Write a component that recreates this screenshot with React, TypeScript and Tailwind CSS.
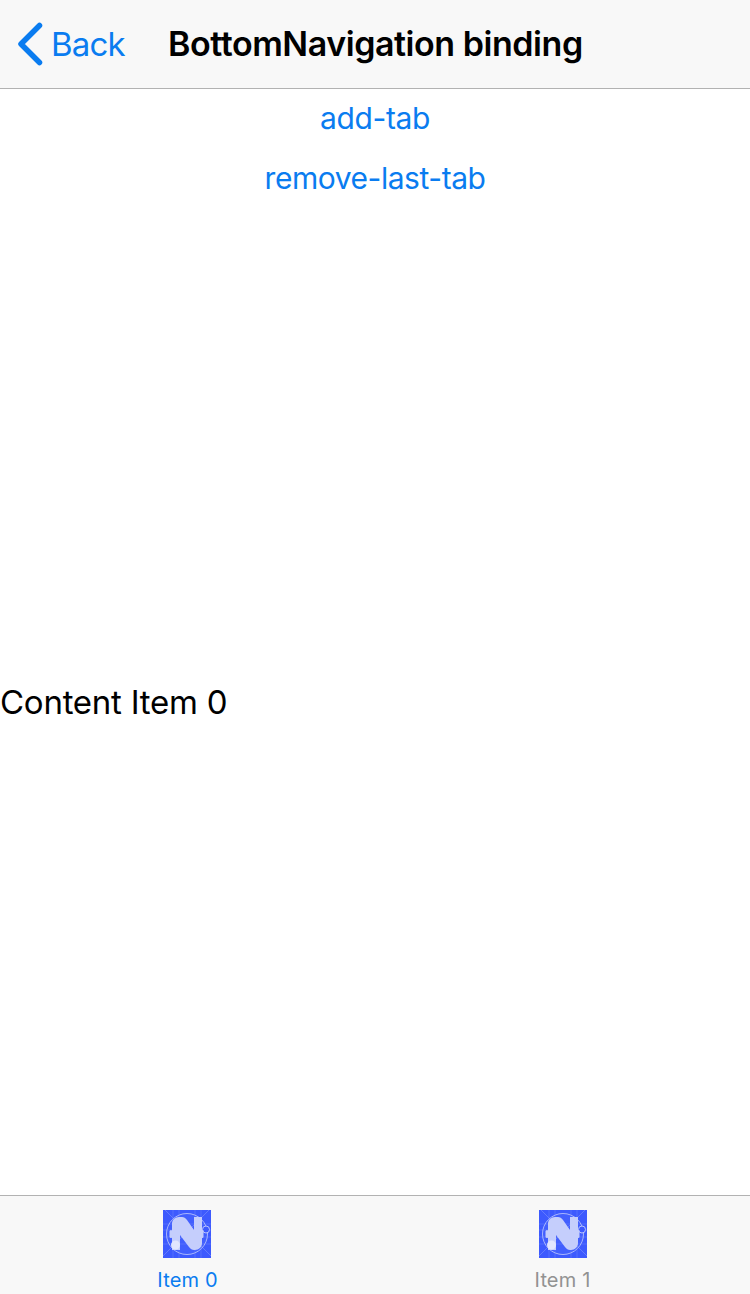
const NativeScriptIcon = () => (
  <svg width="48" height="48" viewBox="0 0 48 48" className="block">
    <rect width="48" height="48" fill="#3d5afe" />
    <g stroke="#8ea0fb" strokeWidth="0.6" fill="none">
      <path d="M0 14H48M0 20H48M0 27H48M0 34H48M10 0V48M16 0V48M32 0V48M38 0V48" opacity="0.5" />
      <path d="M2 0L48 46M46 0L0 46" opacity="0.8" />
    </g>
    <circle cx="24" cy="24" r="20.5" fill="#6f85fc" fillOpacity="0.12" stroke="#a9b6fd" strokeWidth="1" />
    <path d="M9 14C9 10 12 7 16 7H19C21 7 22.5 8 24 10L31 20V7H39V33C39 37 36 40 32 40H31C29 40 27.5 39 26 37L17 25V40H9Z" fill="#c5cefc" />
    <circle cx="12.5" cy="35" r="4.5" fill="#e2e6fe" />
    <circle cx="43" cy="19.5" r="3.5" fill="#3d5afe" stroke="#b9c4fd" strokeWidth="1" />
    <rect x="6.5" y="20" width="3" height="8" rx="1.5" fill="#c5cefc" />
    <rect x="38" y="20" width="2.5" height="8" rx="1.2" fill="#c5cefc" />
  </svg>
);

const tabs = [
  { label: 'Item 0', color: 'text-[#0a7cf0]' },
  { label: 'Item 1', color: 'text-[#929292]' },
];

export default function App() {
  return (
    <div className="flex h-[1294px] w-[750px] flex-col overflow-hidden bg-white font-['Inter',sans-serif] text-black">
      <header className="flex h-[89px] shrink-0 items-center border-b border-[#b2b2b2] bg-[#f8f8f8]">
        <svg width="26" height="44" viewBox="0 0 26 44" className="ml-[17px] shrink-0">
          <path d="M22.5 3.5L4 22L22.5 40.5" fill="none" stroke="#0a7cf0" strokeWidth="5.5" strokeLinecap="round" strokeLinejoin="round" />
        </svg>
        <span className="ml-[8px] w-[117px] shrink-0 text-[33px] leading-none tracking-[-0.8px] text-[#0a7cf0]">Back</span>
        <h1 className="text-[34px] font-semibold leading-none tracking-[-0.45px]">BottomNavigation binding</h1>
      </header>
      <main className="flex min-h-0 flex-1 flex-col">
        <button className="h-[60px] shrink-0 pb-[2px] text-[30px] tracking-[-0.4px] text-[#0a7cf0]">add-tab</button>
        <button className="h-[60px] shrink-0 pb-[2px] text-[30px] tracking-[-0.45px] text-[#0a7cf0]">remove-last-tab</button>
        <div className="flex flex-1 items-center">
          <span className="text-[33px] leading-none tracking-[-0.25px]">Content Item 0</span>
        </div>
      </main>
      <nav className="grid h-[99px] shrink-0 grid-cols-2 border-t border-[#b2b2b2] bg-[#f8f8f8]">
        {tabs.map((tab, i) => (
          <div key={tab.label} className="flex flex-col items-center pt-[14px]">
            <div className={i === 0 ? 'pr-[1px]' : ''}>
              <NativeScriptIcon />
            </div>
            <span className={`mt-[10px] text-[20px] leading-[24px] tracking-[0.15px] ${tab.color}`}>{tab.label}</span>
          </div>
        ))}
      </nav>
    </div>
  );
}
